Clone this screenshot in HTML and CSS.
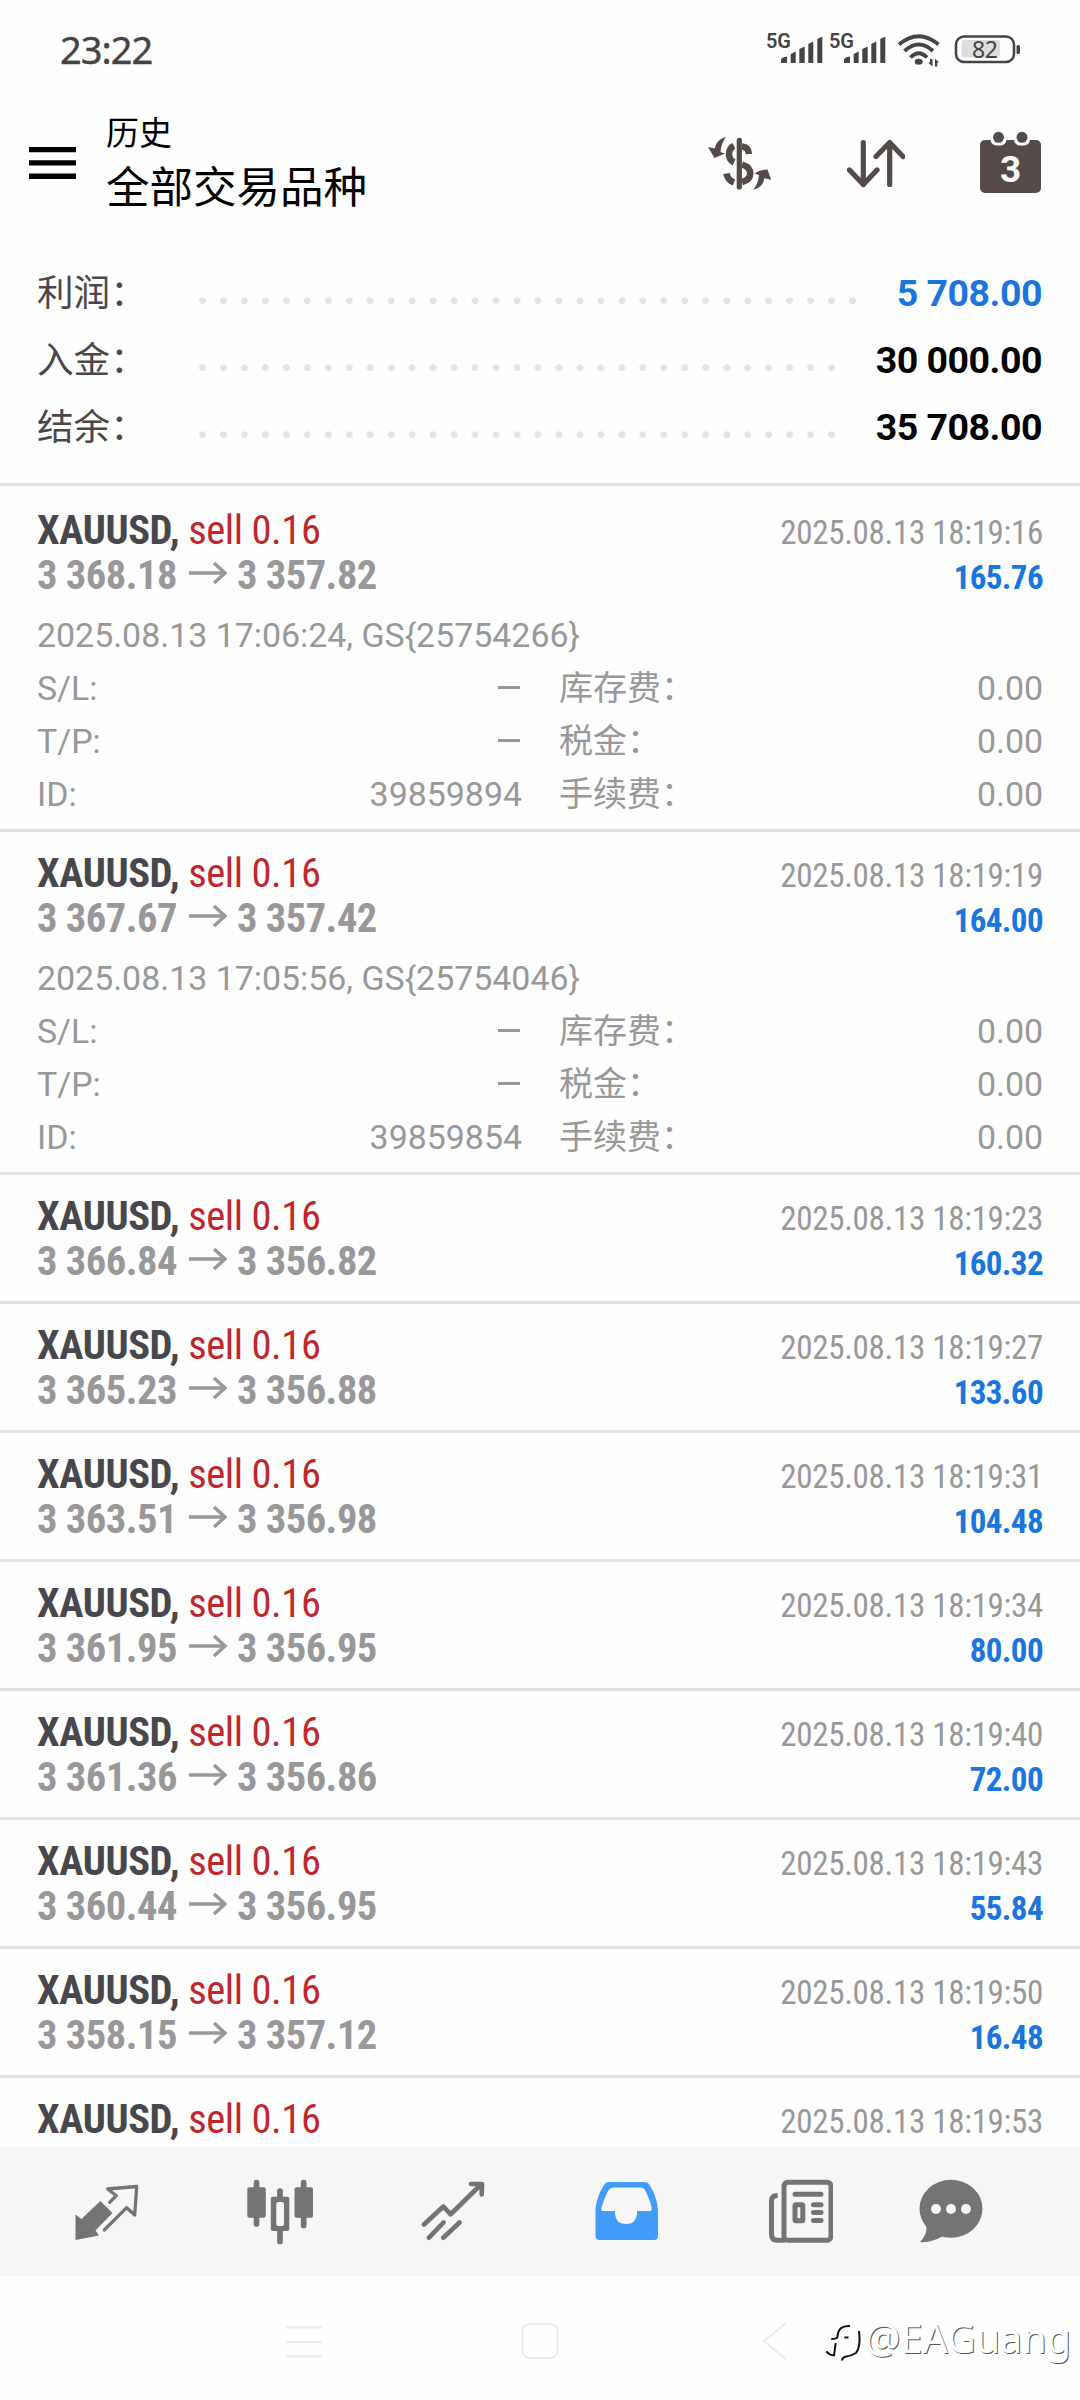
FILE: index.html
```html
<!DOCTYPE html>
<html lang="zh-CN">
<head>
    <meta charset="UTF-8">
    <meta name="viewport" content="width=device-width, initial-scale=1.0">
    <title>历史</title>
    <link rel="stylesheet" href="styles.css">
</head>
<body>
    <div class="status-bar">
        <span class="time">23:22</span>
        <div class="status-icons">
            <svg class="signal" viewBox="0 0 63 36">
                <text x="0" y="15" textLength="25">5G</text>
                <path d="M15 30V27Q15 24 21 23.5V30ZM24.7 30V21L29.7 18.5V30ZM33.3 30V16L38.7 13.5V30ZM42.3 30V11L47.3 8.5V30ZM51.3 30V6L56.3 3.5V30Z"/>
            </svg>
            <svg class="signal" viewBox="0 0 63 36">
                <text x="0" y="15" textLength="25">5G</text>
                <path d="M15 30V27Q15 24 21 23.5V30ZM24.7 30V21L29.7 18.5V30ZM33.3 30V16L38.7 13.5V30ZM42.3 30V11L47.3 8.5V30ZM51.3 30V6L56.3 3.5V30Z"/>
            </svg>
            <svg class="wifi" viewBox="0 0 45 36">
                <path class="arc" d="M2 11.5Q21.7 -5 41.5 11.5M7.5 18Q21.7 5 36 18M13.5 24.5Q21.7 16 30 24.5"/>
                <ellipse cx="21.7" cy="28.7" rx="4" ry="3"/>
                <path d="M33 26h2.5v7.5l-4.5-4h2zM38 33.500v-8l4 4h-1.700v4z"/>
            </svg>
            <svg class="battery" viewBox="0 0 66 36">
                <rect x="2" y="3.500" width="58" height="25.500" rx="8" fill="none" stroke="#444" stroke-width="2.500"/>
                <rect x="7.500" y="7" width="38.500" height="17.500" rx="3" fill="#ddd"/>
                <rect x="62.500" y="12" width="3.500" height="9" rx="1.500"/>
                <text x="18" y="24.500" textLength="26">82</text>
            </svg>
        </div>
    </div>

    <div class="header">
        <svg class="menu" viewBox="0 0 47 32">
            <path d="M0 0h47v5.300h-47zM0 13.300h47v5.300h-47zM0 26.600h47v5.300h-47z"/>
        </svg>
        <div class="titles">
            <p class="small-title">历史</p>
            <p class="big-title">全部交易品种</p>
        </div>
        <div class="actions">
            <svg class="dollar" viewBox="0 0 64 64">
                <path class="line" d="M26 15C19.300 18 19.300 28 26 31.500M34 15.500Q40.500 16 41 23M34 33.500C45 37 45 48 34 51M18.500 42.500Q19.500 49 26 51.500"/>
                <path class="line bar" d="M31.300 9.300V56"/>
                <path d="M18 6C11 8 7.500 12 7 17.500L0 16L6.500 27L17 22.500L12.500 21C13 15 14.500 10.500 18 6ZM45.200 58.800C52.200 56.800 55.700 52.800 56.200 47.300L63.200 48.800L59.500 38.500Q52 38.500 46.500 42.500L51 44C50.500 50 48.700 54.300 45.200 58.800Z"/>
            </svg>
            <svg class="sort" viewBox="0 0 58 64">
                <path class="line" d="M16.300 11.500V53.500M2.500 39L16.300 53.500L30 39M42.700 53.500V11.500M29 25.500L42.700 11.500L56 25.500"/>
            </svg>
            <svg class="calendar" viewBox="0 0 61 64">
                <rect x="0" y="9" width="61" height="53" rx="5"/>
                <rect class="notch" x="10.500" y="-2" width="16" height="16.500" rx="6"/>
                <rect class="notch" x="34" y="-2" width="16" height="16.500" rx="6"/>
                <circle cx="18.500" cy="6.300" r="5.500"/>
                <circle cx="42" cy="6.300" r="5.500"/>
                <text x="30.500" y="51" text-anchor="middle">3</text>
            </svg>
        </div>
    </div>

    <div class="summary">
        <div class="sum-row">
            <span class="sum-label">利润：</span><span class="dots"></span><span class="sum-value blue">5 708.00</span>
        </div>
        <div class="sum-row">
            <span class="sum-label">入金：</span><span class="dots"></span><span class="sum-value">30 000.00</span>
        </div>
        <div class="sum-row">
            <span class="sum-label">结余：</span><span class="dots"></span><span class="sum-value">35 708.00</span>
        </div>
    </div>

    <div class="deals">
        <div class="deal">
            <div class="row"><p class="symbol">XAUUSD, <span class="sell">sell 0.16</span></p><p class="date">2025.08.13 18:19:16</p></div>
            <div class="row"><p class="price">3 368.18<svg class="arrow" viewBox="0 0 38 22"><path d="M0 11H36M25 1L36 11L25 21"/></svg>3 357.82</p><p class="profit">165.76</p></div>
            <div class="details">
                <p>2025.08.13 17:06:24, GS{25754266}</p>
                <div class="detail-row"><span class="left">S/L:</span><span class="val"><i class="dash"></i></span><span class="right">库存费：</span><span>0.00</span></div>
                <div class="detail-row"><span class="left">T/P:</span><span class="val"><i class="dash"></i></span><span class="right">税金：</span><span>0.00</span></div>
                <div class="detail-row"><span class="left">ID:</span><span class="val">39859894</span><span class="right">手续费：</span><span>0.00</span></div>
            </div>
        </div>
        <div class="deal">
            <div class="row"><p class="symbol">XAUUSD, <span class="sell">sell 0.16</span></p><p class="date">2025.08.13 18:19:19</p></div>
            <div class="row"><p class="price">3 367.67<svg class="arrow" viewBox="0 0 38 22"><path d="M0 11H36M25 1L36 11L25 21"/></svg>3 357.42</p><p class="profit">164.00</p></div>
            <div class="details">
                <p>2025.08.13 17:05:56, GS{25754046}</p>
                <div class="detail-row"><span class="left">S/L:</span><span class="val"><i class="dash"></i></span><span class="right">库存费：</span><span>0.00</span></div>
                <div class="detail-row"><span class="left">T/P:</span><span class="val"><i class="dash"></i></span><span class="right">税金：</span><span>0.00</span></div>
                <div class="detail-row"><span class="left">ID:</span><span class="val">39859854</span><span class="right">手续费：</span><span>0.00</span></div>
            </div>
        </div>
        <div class="deal">
            <div class="row"><p class="symbol">XAUUSD, <span class="sell">sell 0.16</span></p><p class="date">2025.08.13 18:19:23</p></div>
            <div class="row"><p class="price">3 366.84<svg class="arrow" viewBox="0 0 38 22"><path d="M0 11H36M25 1L36 11L25 21"/></svg>3 356.82</p><p class="profit">160.32</p></div>
        </div>
        <div class="deal">
            <div class="row"><p class="symbol">XAUUSD, <span class="sell">sell 0.16</span></p><p class="date">2025.08.13 18:19:27</p></div>
            <div class="row"><p class="price">3 365.23<svg class="arrow" viewBox="0 0 38 22"><path d="M0 11H36M25 1L36 11L25 21"/></svg>3 356.88</p><p class="profit">133.60</p></div>
        </div>
        <div class="deal">
            <div class="row"><p class="symbol">XAUUSD, <span class="sell">sell 0.16</span></p><p class="date">2025.08.13 18:19:31</p></div>
            <div class="row"><p class="price">3 363.51<svg class="arrow" viewBox="0 0 38 22"><path d="M0 11H36M25 1L36 11L25 21"/></svg>3 356.98</p><p class="profit">104.48</p></div>
        </div>
        <div class="deal">
            <div class="row"><p class="symbol">XAUUSD, <span class="sell">sell 0.16</span></p><p class="date">2025.08.13 18:19:34</p></div>
            <div class="row"><p class="price">3 361.95<svg class="arrow" viewBox="0 0 38 22"><path d="M0 11H36M25 1L36 11L25 21"/></svg>3 356.95</p><p class="profit">80.00</p></div>
        </div>
        <div class="deal">
            <div class="row"><p class="symbol">XAUUSD, <span class="sell">sell 0.16</span></p><p class="date">2025.08.13 18:19:40</p></div>
            <div class="row"><p class="price">3 361.36<svg class="arrow" viewBox="0 0 38 22"><path d="M0 11H36M25 1L36 11L25 21"/></svg>3 356.86</p><p class="profit">72.00</p></div>
        </div>
        <div class="deal">
            <div class="row"><p class="symbol">XAUUSD, <span class="sell">sell 0.16</span></p><p class="date">2025.08.13 18:19:43</p></div>
            <div class="row"><p class="price">3 360.44<svg class="arrow" viewBox="0 0 38 22"><path d="M0 11H36M25 1L36 11L25 21"/></svg>3 356.95</p><p class="profit">55.84</p></div>
        </div>
        <div class="deal">
            <div class="row"><p class="symbol">XAUUSD, <span class="sell">sell 0.16</span></p><p class="date">2025.08.13 18:19:50</p></div>
            <div class="row"><p class="price">3 358.15<svg class="arrow" viewBox="0 0 38 22"><path d="M0 11H36M25 1L36 11L25 21"/></svg>3 357.12</p><p class="profit">16.48</p></div>
        </div>
        <div class="deal">
            <div class="row"><p class="symbol">XAUUSD, <span class="sell">sell 0.16</span></p><p class="date">2025.08.13 18:19:53</p></div>
        </div>
    </div>

    <div class="tabs">
        <svg viewBox="0 0 66 66">
            <path d="M1.500 35.500L7.500 40L26.300 22L38.500 34L21.500 51.500L25 56.500L1.500 61Z"/>
            <path class="outline" stroke-width="3.300" d="M35.700 23.300L42.300 16.700L33.700 10L62.700 7.500L60.700 36L52.700 28.700L30.300 51"/>
        </svg>
        <svg viewBox="0 0 66 66">
            <path class="outline" stroke-width="5.700" d="M9.500 3.500V45M33 12V62.500M56.700 3.500V46.500"/>
            <rect x="0.300" y="8.300" width="18.500" height="30.500" rx="2"/>
            <rect x="47.500" y="8.300" width="18.500" height="30.500" rx="2"/>
            <rect x="23.800" y="17.700" width="18.500" height="34.300" rx="2"/>
            <rect class="cut" x="29.300" y="23" width="7.700" height="24" rx="2"/>
        </svg>
        <svg viewBox="0 0 66 66">
            <path class="outline" stroke-width="4.700" d="M3 45.500L22.300 27.500L29.700 35.300L60 5.500M50 5H61L60.700 15.500M8 58.700L22.500 43.500M22.300 58.700L38.500 43.500"/>
        </svg>
        <svg class="active" viewBox="0 0 66 66">
            <path d="M1.500 32C1.500 22 6.500 11 10 6Q11.500 3 15 3H50.500Q54 3 55.500 6C59 11 64 22 64 32V57Q64 61 60 61H5.500Q1.500 61 1.500 57Z"/>
            <path class="cut" d="M9 32Q6.500 32 7.500 29C9.500 22 11.500 17 14 12Q16 8.500 19 8.500H46.500Q50 8.500 51.500 12C54 17 56 22 57.700 29Q58.200 32 56 32H43V35Q42 45 32 45Q22 45 21 35V32Z"/>
        </svg>
        <svg viewBox="0 0 66 66">
            <rect class="outline" stroke-width="5" x="17" y="3.200" width="47" height="58" rx="4"/>
            <path class="outline butt" stroke-width="5" d="M10.700 16.500Q4.500 16.500 4.500 22V55Q4.500 61.200 10 61.200H18"/>
            <path class="outline" stroke-width="5" d="M28 15.300H54M46.500 25.700H54M46.500 33.600H54M46.500 41.500H54"/>
            <rect class="outline" stroke-width="5" x="28" y="25.700" width="7.800" height="16" rx="1"/>
        </svg>
        <svg class="chat" viewBox="0 0 66 66">
            <ellipse cx="33" cy="29.700" rx="31.500" ry="29"/>
            <path d="M8 46Q10.500 54 2 63Q13 64 25 57Z"/>
            <circle class="cut" cx="18" cy="30" r="5"/>
            <circle class="cut" cx="33" cy="30" r="5"/>
            <circle class="cut" cx="48" cy="30" r="5"/>
        </svg>
    </div>

    <div class="sys-nav">
        <svg class="recent" viewBox="0 0 38 40"><path d="M1 6.500H37M1 21H37M1 35.500H37"/></svg>
        <svg class="home" viewBox="0 0 38 40"><rect x="1.500" y="3" width="35" height="34" rx="7"/></svg>
        <svg class="back" viewBox="0 0 26 40"><path d="M24 2L2 20L24 38"/></svg>
        <div class="watermark">
            <svg viewBox="0 0 38 44"><path d="M25 7Q13 6 12.500 18Q12 20 6.300 20M19.300 18.500H23.500M10.700 24L9 36.300Q5 36.500 1.300 32.300M34 12Q36 28 31 34Q26 37 21 37.500Q18 38 16.700 41.500"/></svg>
            <span>@EAGuang</span>
        </div>
    </div>
</body>
</html>
```
FILE: styles.css
```css
* {
    margin: 0px;
    padding: 0px;
    box-sizing: border-box;
}

body {
    width: 1080px;
    height: 2400px;
    overflow: hidden;
    display: flex;
    flex-direction: column;
    background-color: #fefefe;
    font-family: Roboto, "Noto Sans CJK SC", sans-serif;
}

svg {
    display: block;
    flex-shrink: 0;
}

/* status bar */
.status-bar {
    height: 100px;
    padding: 2px 60px 0px 60px;
    display: flex;
    justify-content: space-between;
    align-items: center;
    color: #444;
}
.time {
    margin-top: -4px;
    font-family: "Noto Sans", sans-serif;
    font-size: 38px;
    font-weight: 400;
    letter-spacing: -1px;
    -webkit-text-stroke: 0.4px #444;
}
.status-icons {
    display: flex;
    fill: #444;
}
.signal {
    width: 63px;
    height: 36px;
    overflow: visible;
}
.signal text {
    font-size: 20px;
    font-weight: 600;
}
.wifi {
    width: 45px;
    height: 36px;
    margin-left: 5px;
}
.wifi .arc {
    fill: none;
    stroke: #444;
    stroke-width: 3.8px;
}
.battery {
    width: 66px;
    height: 36px;
    margin-left: 12px;
}
.battery text {
    font-family: "Noto Sans", sans-serif;
    font-size: 23px;
}

/* header */
.header {
    height: 126px;
    padding: 0px 39px 0px 29px;
    display: flex;
    align-items: center;
}
.menu {
    width: 47px;
    height: 32px;
}
.titles {
    margin-left: 30px;
    padding-top: 5px;
    flex: 1;
    color: #000;
}
.small-title {
    font-size: 33px;
    line-height: 46px;
}
.big-title {
    font-size: 43.5px;
    line-height: 63px;
}
.actions {
    display: flex;
    gap: 75px;
    fill: #544a48;
}
.actions svg {
    height: 64px;
}
.dollar {
    width: 64px;
}
.sort {
    width: 58px;
}
.calendar {
    width: 61px;
}
.actions .line {
    fill: none;
    stroke: #544a48;
    stroke-width: 5.2px;
    stroke-linecap: round;
    stroke-linejoin: round;
}
.dollar .line {
    stroke-width: 6.5px;
    stroke-linecap: butt;
}
.dollar .bar {
    stroke-width: 5.2px;
    stroke-linecap: round;
}
.calendar .notch {
    fill: #fefefe;
}
.calendar text {
    fill: #fefefe;
    font-size: 37px;
    font-weight: 700;
}

/* summary */
.summary {
    padding: 34px 38px 22px 37px;
    border-bottom: 3px solid #e2e2e2;
}
.sum-row {
    height: 67px;
    line-height: 67px;
    display: flex;
}
.sum-label {
    width: 155px;
    font-size: 36.6px;
    color: #48484a;
}
.dots {
    flex: 1;
    margin: 0px 34px 0px 0px;
    background: radial-gradient(circle at 10.5px 40.7px, #e3e3e5 3px, transparent 3.8px) 0px 0px / 20.98px 67px;
    background-repeat: repeat-x;
}
.sum-value {
    font-size: 37.5px;
    font-weight: 700;
    letter-spacing: -0.5px;
    color: #000;
}
.blue {
    color: #1a76dc;
}

/* deals */
.deals {
    flex: 1;
    overflow: hidden;
}
.deal {
    padding: 19px 37px 17px 37px;
    border-top: 3px solid #e2e2e2;
}
.deal:first-child {
    border-top-color: transparent;
}
.row {
    height: 45px;
    line-height: 45px;
    display: flex;
    justify-content: space-between;
    align-items: baseline;
    font-stretch: 75%;
}
.symbol {
    font-size: 40.5px;
    font-weight: 700;
    letter-spacing: -0.4px;
    color: #48484c;
}
.sell {
    font-weight: 400;
    color: #c0272d;
}
.price {
    font-size: 40.5px;
    font-weight: 700;
    letter-spacing: -0.5px;
    color: #98989a;
}
.arrow {
    display: inline-block;
    width: 38px;
    height: 22px;
    margin: 0px 10px 0px 12px;
    vertical-align: 5px;
    fill: none;
    stroke: #98989a;
    stroke-width: 3.5px;
}
.date {
    font-size: 33px;
    letter-spacing: -0.3px;
    color: #98989a;
}
.profit {
    font-size: 33px;
    font-weight: 700;
    letter-spacing: -0.6px;
    color: #1a76dc;
}
.details {
    margin-top: 11px;
    margin-bottom: -9px;
    font-size: 33.9px;
    line-height: 53px;
    color: #98989a;
}
.detail-row {
    display: flex;
}
.left {
    width: 180px;
}
.val {
    width: 305px;
    text-align: right;
}
.dash {
    display: inline-block;
    width: 22px;
    height: 3px;
    margin-right: 2px;
    vertical-align: 11px;
    background-color: #98989a;
}
.right {
    flex: 1;
    margin-left: 37px;
    font-size: 34px;
}

/* bottom tabs */
.tabs {
    height: 129px;
    padding-left: 74px;
    display: flex;
    align-items: center;
    gap: 107.3px;
    background-color: #f6f6f6;
    fill: #747474;
}
.tabs svg {
    width: 66px;
    height: 66px;
}
.tabs .outline {
    fill: none;
    stroke: #747474;
    stroke-linecap: round;
    stroke-linejoin: round;
}
.tabs .butt {
    stroke-linecap: butt;
}
.tabs .cut {
    fill: #f8f8f8;
}
.tabs .active {
    fill: #439cfa;
}
.tabs .chat {
    margin-left: -22px;
}

/* system navigation */
.sys-nav {
    height: 124px;
    padding: 6px 0px 0px 285px;
    display: flex;
    align-items: center;
    fill: none;
    stroke: #ececec;
    stroke-width: 2px;
}
.recent,
.home {
    width: 38px;
    height: 40px;
}
.home {
    margin-left: 198px;
}
.back {
    width: 26px;
    height: 40px;
    margin-left: 203px;
}
.watermark {
    margin-left: 37px;
    display: flex;
    align-items: center;
    font-family: "Noto Sans", sans-serif;
    font-size: 39.5px;
    line-height: 44px;
    color: #fff;
    text-shadow: 1px 1px 0px #555;
}
.watermark span {
    margin-top: -7px;
}
.watermark svg {
    width: 38px;
    height: 44px;
    margin-right: 2px;
    stroke: #111;
}
```
